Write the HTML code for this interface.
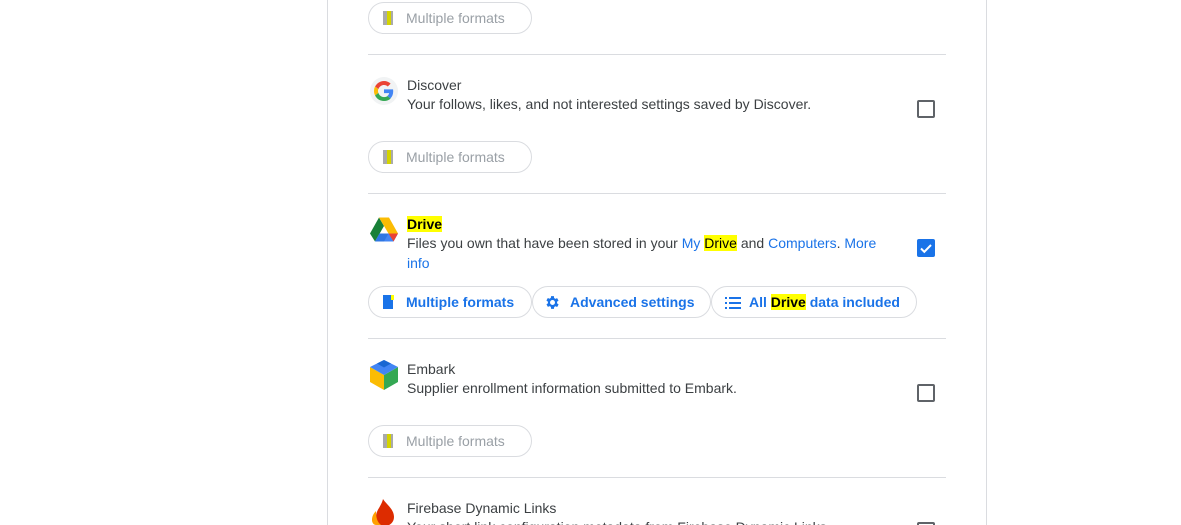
<!DOCTYPE html>
<html><head><meta charset="utf-8"><style>
html,body{margin:0;width:1181px;height:525px;overflow:hidden}
body{background:#fff;font-family:"Liberation Sans",Arial,sans-serif;position:relative}
.card{position:absolute;left:327px;top:-10px;width:658px;height:545px;border-left:1px solid #dadce0;border-right:1px solid #dadce0}
.a{position:absolute}
.div{position:absolute;left:368px;width:578px;height:1px;background:#dadce0}
.t{position:absolute;left:407px;font-size:14px;color:#3c4043;line-height:20px;white-space:nowrap}
.d{position:absolute;left:407px;font-size:14px;color:#3c4043;line-height:20px;width:490px}
.chip{position:absolute;height:32px;border:1px solid #dadce0;border-radius:16px;box-sizing:border-box;font-size:14px;line-height:30px;color:#9aa0a6;white-space:nowrap}
.chip.on{color:#1a73e8;font-weight:bold}
.cb{position:absolute;left:917px;width:18px;height:18px;box-sizing:border-box;border:2px solid #5f6368;border-radius:2px}
.hl{background:#ff0;color:#000}
.lk{color:#1a73e8}
.fi{position:absolute;left:14px;top:8px;width:10px;height:14px}
</style></head><body>
<div class="card"></div>

<div class="chip" style="left:368px;top:2px;width:164px"><span class="fi" style="background:#aaa"></span><span class="fi" style="width:4px;left:18px;background:#d4d400"></span><span style="position:absolute;left:37px">Multiple formats</span></div>
<div class="div" style="top:54px"></div>

<div class="a" style="left:370px;top:77px;width:28px;height:28px;border-radius:50%;background:#f1f3f4"></div>
<svg class="a" style="left:374px;top:81px" width="20" height="20" viewBox="0 0 48 48"><path fill="#EA4335" d="M24 9.5c3.5 0 6.6 1.2 9.1 3.6l6.8-6.8C35.8 2.4 30.4 0 24 0 14.6 0 6.6 5.4 2.6 13.3l7.9 6.1C12.4 13.7 17.7 9.5 24 9.5z"/><path fill="#4285F4" d="M46.1 24.6c0-1.6-.2-3.1-.4-4.6H24v9h12.4c-.6 2.9-2.2 5.3-4.7 7l7.6 5.9c4.4-4.1 6.8-10.1 6.8-17.3z"/><path fill="#FBBC05" d="M10.5 28.6A14.5 14.5 0 0 1 9.5 24c0-1.6.3-3.2.8-4.6l-7.9-6.1A24 24 0 0 0 0 24c0 3.9.9 7.5 2.6 10.7l7.9-6.1z"/><path fill="#34A853" d="M24 48c6.5 0 11.9-2.1 15.9-5.8l-7.6-5.9c-2.1 1.4-4.8 2.3-8.3 2.3-6.3 0-11.6-4.2-13.5-10l-7.9 6.1C6.6 42.6 14.6 48 24 48z"/></svg>
<div class="t" style="top:75px">Discover</div>
<div class="d" style="top:94px;width:520px">Your follows, likes, and not interested settings saved by Discover.</div>
<div class="cb" style="top:100px"></div>
<div class="chip" style="left:368px;top:141px;width:164px"><span class="fi" style="background:#aaa"></span><span class="fi" style="width:4px;left:18px;background:#d4d400"></span><span style="position:absolute;left:37px">Multiple formats</span></div>
<div class="div" style="top:193px"></div>

<svg class="a" style="left:370px;top:217px" width="28" height="25" viewBox="0 0 28 24"><path fill="#188038" d="M9 0L14 8.5 5 24 0 16z"/><path fill="#fbbc04" d="M9 0h10l9 16h-9.5z"/><path fill="#4285f4" d="M9.5 16H28l-4.5 8H5z"/><path fill="#ea4335" d="M18.5 16H28l-4.5 8z"/><path fill="#1967d2" d="M9.5 16h9l-4.5 8H5z" opacity=".5"/></svg>
<div class="t" style="top:214px;font-weight:bold"><span class="hl">Drive</span></div>
<div class="d" style="top:233px">Files you own that have been stored in your <span class="lk">My</span> <span class="hl">Drive</span> and <span class="lk">Computers</span>. <span class="lk">More info</span></div>
<div class="a" style="left:917px;top:239px;width:18px;height:18px;background:#1a73e8;border-radius:2px"></div>
<svg class="a" style="left:917px;top:239px" width="18" height="18"><path d="M4 9.5l3.3 3.3L14 6" stroke="#fff" stroke-width="2" fill="none"/></svg>
<div class="chip on" style="left:368px;top:286px;width:164px"><span class="fi" style="background:#1a73e8"></span><span class="fi" style="width:3px;height:5px;left:22px;background:#ff0"></span><span style="position:absolute;left:37px">Multiple formats</span></div>
<div class="chip on" style="left:532px;top:286px;width:179px"><svg class="a" style="left:11px;top:7px" width="17" height="17" viewBox="0 0 24 24"><path fill="#1a73e8" d="M19.4 13a7.5 7.5 0 0 0 0-2l2.1-1.6-2-3.5-2.5 1a7 7 0 0 0-1.7-1L15 3h-4l-.4 2.7a7 7 0 0 0-1.7 1l-2.5-1-2 3.5L6.6 11a7.5 7.5 0 0 0 0 2l-2.1 1.6 2 3.5 2.5-1a7 7 0 0 0 1.7 1L11 21h4l.4-2.7a7 7 0 0 0 1.7-1l2.5 1 2-3.5zM13 15.5a3.5 3.5 0 1 1 0-7 3.5 3.5 0 0 1 0 7z" transform="translate(-1,0)"/></svg><span style="position:absolute;left:37px">Advanced settings</span></div>
<div class="chip on" style="left:711px;top:286px;width:206px"><svg class="a" style="left:13px;top:10px" width="16" height="12"><g fill="#1a73e8"><rect x="0" y="0" width="2" height="2"/><rect x="0" y="5" width="2" height="2"/><rect x="0" y="10" width="2" height="2"/><rect x="4" y="0" width="12" height="2"/><rect x="4" y="5" width="12" height="2"/><rect x="4" y="10" width="12" height="2"/></g></svg><span style="position:absolute;left:37px">All <span class="hl">Drive</span> data included</span></div>
<div class="div" style="top:338px"></div>

<svg class="a" style="left:370px;top:360px" width="28" height="30" viewBox="0 0 28 30"><path fill="#fbbc04" d="M0 7l14 8v15L0 22z"/><path fill="#34a853" d="M28 7l-14 8v15l14-8z"/><path fill="#4285f4" d="M14 0l14 7-14 8L0 7z"/><path fill="#1967d2" d="M14 0l7 3.5-7 4-7-4z"/></svg>
<div class="t" style="top:359px">Embark</div>
<div class="d" style="top:378px">Supplier enrollment information submitted to Embark.</div>
<div class="cb" style="top:384px"></div>
<div class="chip" style="left:368px;top:425px;width:164px"><span class="fi" style="background:#aaa"></span><span class="fi" style="width:4px;left:18px;background:#d4d400"></span><span style="position:absolute;left:37px">Multiple formats</span></div>
<div class="div" style="top:477px"></div>

<svg class="a" style="left:371px;top:499px" width="24" height="26" viewBox="0 0 24 26"><path fill="#dd2c00" d="M12 0c3 5 11 10 11 18a9 9 0 0 1-18 0C5 11 10 8 12 0z"/><path fill="#ffa000" d="M5 12c-3 3-4 6-4 9 0 3 2 5 4 5h5c-4-3-5-8-5-14z"/></svg>
<div class="t" style="top:498px">Firebase Dynamic Links</div>
<div class="d" style="top:517px;width:520px">Your short link configuration metadata from Firebase Dynamic Links.</div>
<div class="cb" style="top:522px"></div>
</body></html>
